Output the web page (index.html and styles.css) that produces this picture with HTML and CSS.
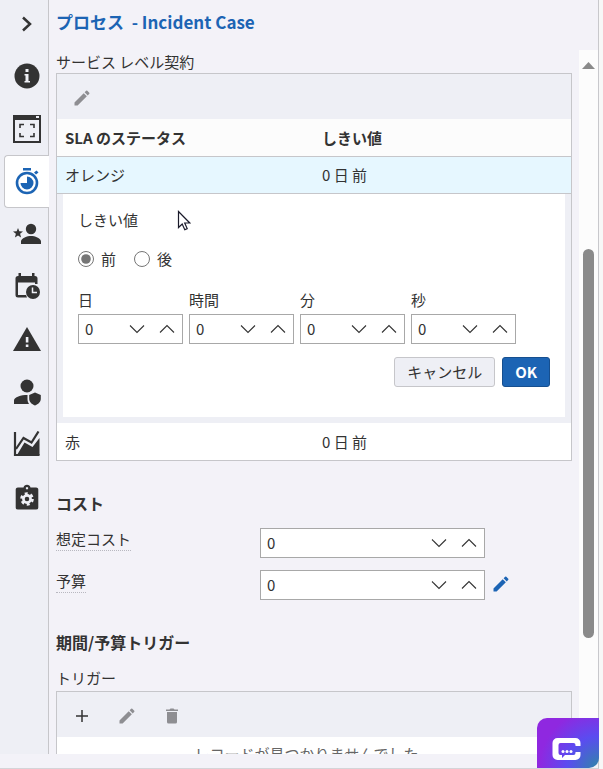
FILE: index.html
```
<!DOCTYPE html>
<html lang="ja">
<head>
    <meta charset="UTF-8">
    <meta name="viewport" content="width=device-width, initial-scale=1.0">
    <title>Incident Case</title>
    <link rel="stylesheet" href="styles.css">
</head>
<body>

    <!-- Shared icon shapes -->
    <svg class="sprite" aria-hidden="true">
        <symbol id="pencil" viewBox="0 0 24 24">
            <path d="M3 17.25V21h3.75L17.81 9.94l-3.75-3.75L3 17.25zM20.71 7.04a1 1 0 0 0 0-1.41l-2.34-2.34a1 1 0 0 0-1.41 0l-1.83 1.83 3.75 3.75 1.83-1.83z"/>
        </symbol>
        <symbol id="down" viewBox="0 0 16 10">
            <path d="M1 1.5l7 7 7-7" fill="none" stroke="currentColor" stroke-width="1.1"/>
        </symbol>
        <symbol id="up" viewBox="0 0 16 10">
            <path d="M1 8.5l7-7 7 7" fill="none" stroke="currentColor" stroke-width="1.1"/>
        </symbol>
    </svg>

    <div class="app">
        <div class="panes">
            <nav class="sidebar">
                <button class="expand" type="button" aria-label="展開">
                    <svg width="14" height="18" viewBox="0 0 14 18"><path d="M3 2.5l7 6.500-7 6.500" fill="none" stroke="currentColor" stroke-width="2.5"/></svg>
                </button>
                <div class="tabs">
                    <a class="tab" href="#info" aria-label="情報">
                        <svg width="26" height="26" viewBox="0 0 26 26"><circle cx="13" cy="13" r="12.5"/><path d="M11.5 6h3v3h-3zM10.5 11h4v7H16v1.500h-5.500V18h1v-5.500h-1z" fill="#eeeff5"/></svg>
                    </a>
                    <a class="tab" href="#form" aria-label="フォーム">
                        <svg width="28" height="28" viewBox="0 0 28 28"><path d="M0 0h28v28H0zM2 5v21h24V5zM23 1v2h3V1z" fill-rule="evenodd"/><path d="M7 13V9.500h4M17 9.500h4V13M7 18v3.500h4M17 21.500h4V18" fill="none" stroke="currentColor" stroke-width="1.6"/></svg>
                    </a>
                    <a class="tab active" href="#sla" aria-label="期間">
                        <svg width="26" height="28" viewBox="0 0 26 28"><path d="M9 1h8v2.500H9zM20 5.500l2.500-2 2 2-2.500 2z"/><circle cx="13" cy="16" r="10" fill="none" stroke="currentColor" stroke-width="2.6"/><path d="M13 16V9.500a6.500 6.500 0 1 1-6.500 6.500z"/></svg>
                    </a>
                    <a class="tab" href="#owner" aria-label="担当">
                        <svg width="28" height="22" viewBox="0 0 28 22"><circle cx="18" cy="6" r="5.2"/><path d="M8 21v-2.500c0-3.500 6.500-5.500 10-5.500s10 2 10 5.500V21zM5 5l1.300 3.300 3.700.2-2.900 2.300 1 3.700L5 12.500l-3.100 2 1-3.700L0 8.500l3.700-.2z"/></svg>
                    </a>
                    <a class="tab" href="#schedule" aria-label="予定">
                        <svg width="28" height="28" viewBox="0 0 28 28"><path d="M5.500 1H8v3h11V1h2.500v3H22a2.500 2.500 0 0 1 2.500 2.500V12H22v-1.500H5V23h8l1 2.500H5A2.500 2.500 0 0 1 2.500 23V6.500A2.500 2.500 0 0 1 5 4h.500z"/><circle cx="20" cy="20" r="7"/><path d="M19.500 15.500v5H24" fill="none" stroke="#eeeff5" stroke-width="1.5"/></svg>
                    </a>
                    <a class="tab" href="#risk" aria-label="リスク">
                        <svg width="28" height="24" viewBox="0 0 28 24"><path d="M14 0l14 24H0z"/><path d="M12.800 10h2.600v5.500h-2.600zM12.800 17.500h2.600V20h-2.600z" fill="#eeeff5"/></svg>
                    </a>
                    <a class="tab" href="#security" aria-label="権限">
                        <svg width="28" height="28" viewBox="0 0 28 28"><circle cx="14" cy="8" r="6.5"/><path d="M1 26v-3.500C1 19 8 17 14.500 17v4c0 2 .5 3.500 1.500 5zM22 14.500l5.800 2.500v3.800c0 3.200-2.500 5.500-5.800 6.700-3.300-1.200-5.800-3.500-5.800-6.700V17z"/></svg>
                    </a>
                    <a class="tab" href="#metrics" aria-label="分析">
                        <svg width="28" height="26" viewBox="0 0 28 26"><path d="M2 1v23h24.500" fill="none" stroke="currentColor" stroke-width="2.2"/><path d="M3 18l7.500-11 8 4.500 7-11" fill="none" stroke="currentColor" stroke-width="2.2"/><path d="M4 24l7.500-12.500 8 4.500 7-9V24z"/></svg>
                    </a>
                    <a class="tab" href="#settings" aria-label="設定">
                        <svg width="24" height="26" viewBox="0 0 24 26"><path d="M3 3.500h5.500a3.600 3.600 0 0 1 7 0H21A2.300 2.300 0 0 1 23.300 6v17A2.300 2.300 0 0 1 21 25.500H3A2.300 2.300 0 0 1 .7 23V6A2.300 2.300 0 0 1 3 3.500zM12 3a1.200 1.200 0 1 0 .01 0z" fill-rule="evenodd"/><circle cx="12" cy="15" r="5.3" fill="none" stroke="#eeeff5" stroke-width="3" stroke-dasharray="2.8 2.75"/><circle cx="12" cy="15" r="3.6" fill="none" stroke="#eeeff5" stroke-width="2.6"/></svg>
                    </a>
                </div>
            </nav>

            <main class="main">
                <h1 class="title">プロセス &nbsp;- Incident Case</h1>

                <div class="scroll-row">
                    <div class="content">
                        <div class="label">サービス レベル契約</div>
                        <section class="grid">
                            <div class="toolbar">
                                <button class="tool" type="button" disabled aria-label="編集"><svg width="20" height="20"><use href="#pencil"/></svg></button>
                            </div>
                            <table>
                                <thead>
                                    <tr><th>SLA のステータス</th><th>しきい値</th></tr>
                                </thead>
                                <tbody>
                                    <tr class="selected"><td>オレンジ</td><td>0 日 前</td></tr>
                                    <tr>
                                        <td class="editor-cell" colspan="2">
                                            <form class="editor">
                                                <div class="editor-title">しきい値</div>
                                                <div class="radios">
                                                    <label><input type="radio" name="when" checked>前</label>
                                                    <label><input type="radio" name="when">後</label>
                                                </div>
                                                <div class="durations">
                                                    <div class="duration">
                                                        <label for="days">日</label>
                                                        <div class="stepper">
                                                            <input id="days" type="number" value="0">
                                                            <button type="button" aria-label="減らす"><svg width="16" height="10"><use href="#down"/></svg></button>
                                                            <button type="button" aria-label="増やす"><svg width="16" height="10"><use href="#up"/></svg></button>
                                                        </div>
                                                    </div>
                                                    <div class="duration">
                                                        <label for="hours">時間</label>
                                                        <div class="stepper">
                                                            <input id="hours" type="number" value="0">
                                                            <button type="button" aria-label="減らす"><svg width="16" height="10"><use href="#down"/></svg></button>
                                                            <button type="button" aria-label="増やす"><svg width="16" height="10"><use href="#up"/></svg></button>
                                                        </div>
                                                    </div>
                                                    <div class="duration">
                                                        <label for="minutes">分</label>
                                                        <div class="stepper">
                                                            <input id="minutes" type="number" value="0">
                                                            <button type="button" aria-label="減らす"><svg width="16" height="10"><use href="#down"/></svg></button>
                                                            <button type="button" aria-label="増やす"><svg width="16" height="10"><use href="#up"/></svg></button>
                                                        </div>
                                                    </div>
                                                    <div class="duration">
                                                        <label for="seconds">秒</label>
                                                        <div class="stepper">
                                                            <input id="seconds" type="number" value="0">
                                                            <button type="button" aria-label="減らす"><svg width="16" height="10"><use href="#down"/></svg></button>
                                                            <button type="button" aria-label="増やす"><svg width="16" height="10"><use href="#up"/></svg></button>
                                                        </div>
                                                    </div>
                                                </div>
                                                <div class="actions">
                                                    <button class="btn" type="button">キャンセル</button>
                                                    <button class="btn primary" type="button">OK</button>
                                                </div>
                                            </form>
                                        </td>
                                    </tr>
                                    <tr><td>赤</td><td>0 日 前</td></tr>
                                </tbody>
                            </table>
                        </section>

                        <h2 class="heading">コスト</h2>
                        <div class="field">
                            <div class="field-label"><label for="cost">想定コスト</label></div>
                            <div class="stepper">
                                <input id="cost" type="number" value="0">
                                <button type="button" aria-label="減らす"><svg width="16" height="10"><use href="#down"/></svg></button>
                                <button type="button" aria-label="増やす"><svg width="16" height="10"><use href="#up"/></svg></button>
                            </div>
                        </div>
                        <div class="field">
                            <div class="field-label"><label for="budget">予算</label></div>
                            <div class="stepper">
                                <input id="budget" type="number" value="0">
                                <button type="button" aria-label="減らす"><svg width="16" height="10"><use href="#down"/></svg></button>
                                <button type="button" aria-label="増やす"><svg width="16" height="10"><use href="#up"/></svg></button>
                            </div>
                            <button class="edit" type="button" aria-label="予算を編集"><svg width="20" height="20"><use href="#pencil"/></svg></button>
                        </div>

                        <h2 class="heading">期間/予算トリガー</h2>
                        <div class="label">トリガー</div>
                        <section class="grid">
                            <div class="toolbar">
                                <button class="tool" type="button" aria-label="追加"><svg width="14" height="14" viewBox="0 0 14 14"><path d="M7 1v12M1 7h12" stroke="currentColor" stroke-width="1.5"/></svg></button>
                                <button class="tool" type="button" disabled aria-label="編集"><svg width="20" height="20"><use href="#pencil"/></svg></button>
                                <button class="tool" type="button" disabled aria-label="削除"><svg width="14" height="16" viewBox="0 0 14 16"><path d="M1 1.500h3.500l1-1h3l1 1H13V3H1zM2 4h10v10a1.500 1.500 0 0 1-1.500 1.500h-7A1.500 1.500 0 0 1 2 14z"/></svg></button>
                            </div>
                            <p class="empty">レコードが見つかりませんでした。</p>
                        </section>
                    </div>

                    <div class="scrollbar">
                        <svg width="13" height="7" viewBox="0 0 13 7"><path d="M0 7l6.500-7L13 7z"/></svg>
                        <div class="thumb"></div>
                    </div>
                </div>
            </main>
        </div>

        <button class="chat" type="button" aria-label="チャット">
            <svg width="30" height="24" viewBox="0 0 30 24">
                <path d="M28.500 9V6a5 5 0 0 0-5-5h-18a5 5 0 0 0-5 5v12a5 5 0 0 0 5 5h18a5 5 0 0 0 5-5v-3h-5v1a2 2 0 0 1-2 2H13l-3 3v-3H8.500a2 2 0 0 1-2-2V8a2 2 0 0 1 2-2h13a2 2 0 0 1 2 2v1z" fill="#fff"/>
                <circle cx="11" cy="14.500" r="1.5" fill="#fff"/><circle cx="15" cy="14.500" r="1.5" fill="#fff"/><circle cx="19" cy="14.500" r="1.5" fill="#fff"/>
            </svg>
        </button>

        <svg class="pointer" width="14" height="22" viewBox="0 0 14 22"><path d="M1.500 1.500v16l3.700-3.500 2.600 5.700 2.400-1.100-2.500-5.600h5.100z" fill="#fff" stroke="#1a1a2a" stroke-width="1.2"/></svg>
    </div>
</body>
</html>
```
FILE: styles.css
```
* {
    box-sizing: border-box;
}

body {
    margin: 0;
    background: #f7f7f7;
    color: #333;
    font-family: "Noto Sans CJK JP", sans-serif;
    font-size: 15px;
    line-height: 22px;
}

button,
input {
    font: inherit;
    color: inherit;
}

button {
    padding: 0;
    border: 0;
    background: none;
}

svg {
    display: block;
    fill: currentColor;
}

.sprite {
    position: absolute;
    width: 0;
    height: 0;
}

.app {
    position: relative;
    height: 100vh;
    margin-right: 4px;
    padding-bottom: 14px;
    background: #f3f2f8;
    border-right: 1px solid #c8c8cc;
    border-bottom: 1px solid #d4d4d8;
}

.panes {
    display: flex;
    height: 100%;
}

/* Sidebar */
.sidebar {
    flex: none;
    width: 49px;
    background: #eeeff5;
    border-right: 1px solid #c6c6ca;
}

.expand {
    display: flex;
    align-items: center;
    justify-content: center;
    width: 100%;
    height: 50px;
    padding: 0 0 2px 6px;
}

.tabs {
    display: grid;
    grid-auto-rows: 1fr;
    height: 473px;
}

.tab {
    display: flex;
    align-items: center;
    justify-content: center;
    margin: 0 -1px 0 4px;
    padding-right: 1px;
    border: 1px solid transparent;
    border-right: 0;
    color: #333;
}

.tab.active {
    background: #fff;
    border-color: #c6c6ca;
    border-radius: 4px 0 0 4px;
    color: #1c64b4;
}

/* Main pane */
.main {
    flex: 1;
    display: flex;
    flex-direction: column;
    min-width: 0;
}

.title {
    flex: none;
    height: 50px;
    margin: 0;
    padding: 11px 7px 0;
    color: #1c64b4;
    font-size: 17px;
    font-weight: bold;
    line-height: 22px;
}

.scroll-row {
    flex: 1;
    display: flex;
    min-height: 0;
}

.content {
    flex: 1;
    min-width: 0;
    padding: 0 7px;
    overflow: hidden;
}

.scrollbar {
    flex: none;
    display: flex;
    flex-direction: column;
    align-items: center;
    width: 19px;
    padding-top: 12px;
    background: #fcfcfc;
    color: #8a8a8a;
}

.thumb {
    width: 11px;
    height: 389px;
    margin-top: 180px;
    border-radius: 6px;
    background: #8a8a8a;
}

.label {
    padding-top: 1px;
}

/* Grids */
.grid {
    background: #fff;
    border: 1px solid #c6c6ca;
}

.toolbar {
    display: flex;
    height: 45px;
    padding: 2px 2px 0;
    background: #eeeff5;
}

.tool {
    display: flex;
    align-items: center;
    justify-content: center;
    width: 45px;
}

.tool:disabled {
    color: #8e8e92;
}

table {
    width: 100%;
    border-collapse: separate;
    border-spacing: 0;
    table-layout: fixed;
}

th,
td {
    height: 37px;
    padding: 0 8px;
    text-align: left;
}

th {
    height: 38px;
    background: #fcfcfc;
    border-bottom: 1px solid #c6c6ca;
}

.selected td {
    background: #e6f7ff;
    border-bottom: 1px solid #c6c6ca;
}

.editor-cell {
    padding: 0 6px 6px;
    background: #eeeff5;
}

/* Threshold editor */
.editor {
    padding: 15px 15px 30px;
    background: #fff;
}

.radios {
    display: flex;
    gap: 18px;
    margin: 17px 0 19px;
}

.radios label {
    display: flex;
    align-items: center;
    gap: 7px;
}

.radios input {
    width: 16px;
    height: 16px;
    margin: 0;
    accent-color: #767676;
}

.durations {
    display: flex;
    gap: 6px;
}

.duration {
    width: 105px;
}

.duration label {
    display: block;
    margin-bottom: 3px;
}

.stepper {
    display: flex;
    height: 30px;
    background: #fff;
    border: 1px solid #a8a8a8;
}

.stepper input {
    flex: 1;
    min-width: 0;
    padding: 0 6px;
    border: 0;
    background: none;
    appearance: textfield;
}

.stepper input::-webkit-inner-spin-button {
    display: none;
}

.stepper button {
    display: flex;
    align-items: center;
    justify-content: center;
    width: 30px;
}

.actions {
    display: flex;
    justify-content: flex-end;
    gap: 7px;
    margin-top: 13px;
}

.btn {
    height: 30px;
    padding: 0 12px;
    background: #eeeff5;
    border: 1px solid #c6c6ca;
    border-radius: 3px;
}

.btn.primary {
    background: #1c64b4;
    border-color: #164f8f;
    color: #fff;
    font-weight: bold;
}

/* Fields */
.heading {
    margin: 31px 0 14px;
    font-size: 16px;
    line-height: 22px;
}

.field {
    display: flex;
    margin-bottom: 12px;
}

.field-label {
    width: 204px;
}

.field-label label {
    display: inline-block;
    border-bottom: 1px dotted #b8b8c0;
}

.field .stepper {
    width: 225px;
}

.edit {
    margin: 0 0 3px 6px;
    color: #1c64b4;
}

.heading + .label {
    padding: 0 0 2px;
}

.empty {
    margin: 0;
    padding: 6px 0;
    color: #666;
    text-align: center;
}

/* Chat launcher */
.chat {
    position: absolute;
    right: -1px;
    bottom: 0;
    display: flex;
    align-items: center;
    justify-content: center;
    width: 62px;
    height: 50px;
    padding: 11px 3px 0 0;
    border-radius: 10px 0 10px 0;
    background: radial-gradient(circle at 100% 100%, #2f86a8 0, #5a4cf0 40%, #8f28e0 75%);
}

.pointer {
    position: absolute;
    left: 177px;
    top: 210px;
}
```
